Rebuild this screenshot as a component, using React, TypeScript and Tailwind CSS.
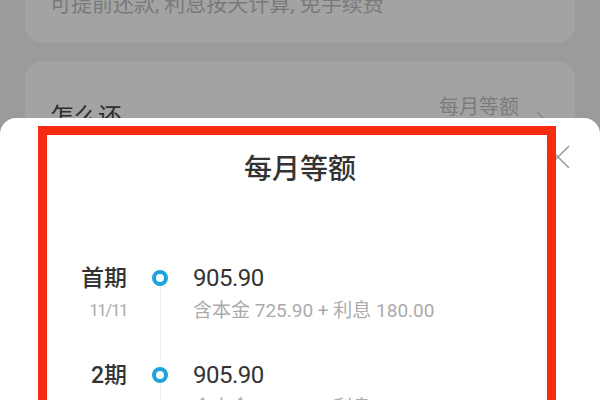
import React from "react";

const FONT = { fontFamily: 'Roboto, "Noto Sans CJK SC", sans-serif' };

const rows = [
  { label: "首期", date: "11/11", amount: "905.90", detail: "含本金 725.90 + 利息 180.00" },
  { label: "2期", date: "12/11", amount: "905.90", detail: "含本金 725.90 + 利息 180.00" },
];

export default function App() {
  return (
    <div className="relative h-[400px] w-[600px] overflow-hidden bg-[#9b9b9b]" style={FONT}>
      {/* dimmed page behind the sheet */}
      <div className="-mt-[30px] mx-[25px] h-[72px] rounded-b-2xl rounded-t-2xl bg-[#a3a3a3] pl-[25px] pt-[22px]">
        <p className="text-[21px] leading-[24px] text-[#7a7a7a]">可提前还款, 利息按天计算, 免手续费</p>
      </div>
      <div className="mx-[25px] mt-[20px] h-[200px] rounded-2xl bg-[#a3a3a3] pl-[25px] pr-[30px] pt-[26px]">
        <div className="flex items-start justify-between">
          <span className="mt-[14px] text-[24px] leading-[30px] text-[#2e2e2e]">怎么还</span>
          <div className="flex items-center gap-[16px]">
            <span className="text-[20px] leading-[24px] text-[#7b7b7b]">每月等额</span>
            <svg width="10" height="16" viewBox="0 0 10 16" className="mt-[22px]">
              <path d="M2 2l6 6-6 6" fill="none" stroke="#8a8a8a" strokeWidth="1.5" />
            </svg>
          </div>
        </div>
      </div>

      {/* bottom sheet */}
      <div className="absolute left-0 right-0 top-[118px] h-[300px] rounded-t-[16px] bg-white">
        <svg
          width="24"
          height="24"
          viewBox="0 0 24 24"
          className="absolute left-[546px] top-[27px]"
        >
          <path d="M1 1l22 22M23 1L1 23" fill="none" stroke="#9a9a9a" strokeWidth="1.6" />
        </svg>

        <div className="relative ml-[38px] mt-[8px] h-[320px] w-[518px] border-[9px] border-[#f72b0f]">
          <h2 className="pl-[6px] pt-[17px] text-center text-[28px] font-medium leading-[36px] text-[#333333]">
            每月等额
          </h2>

          <div className="mt-[75px]">
            {rows.map((r, i) => (
              <div key={i} className="flex h-[97px]">
                <div className="w-[80px] pt-[1px] text-right">
                  <div className="text-[23px] font-medium leading-[30px] text-[#333333]">{r.label}</div>
                  <div className="mt-[3px] text-[17px] leading-[26px] tracking-[-1.5px] text-[#ababab]">{r.date}</div>
                </div>
                <div className="flex w-[66px] flex-col items-center">
                  <span className="mt-[7px] h-[16px] w-[16px] shrink-0 rounded-full border-[4px] border-[#1ea3dc] bg-white" />
                  <span className="w-px flex-1 bg-[#ececec]" />
                </div>
                <div>
                  <div className="text-[24px] leading-[30px] tracking-[-0.5px] text-[#333333]">{r.amount}</div>
                  <div className="mt-[5px] text-[19px] leading-[26px] text-[#ababab]">{r.detail}</div>
                </div>
              </div>
            ))}
          </div>
        </div>
      </div>
    </div>
  );
}
